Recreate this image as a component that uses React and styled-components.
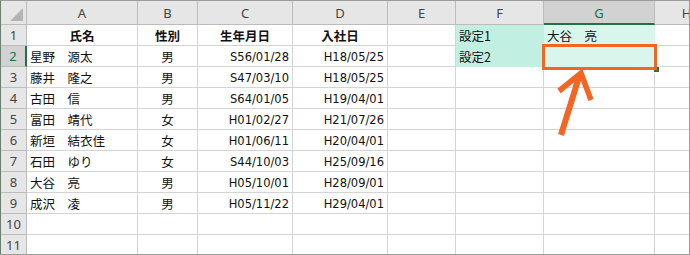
import React from "react";
import styled, { createGlobalStyle } from "styled-components";

const GlobalStyle = createGlobalStyle`
  html, body {
    margin: 0;
    padding: 0;
    background: #fff;
  }
`;

const GRID = "#d4d4d4";
const HEAD_LINE = "#bcbcbc";
const EXCEL_GREEN = "#217346";
const ORANGE = "#f26522";

const Frame = styled.div`
  position: relative;
  width: 690px;
  height: 255px;
  box-sizing: border-box;
  border-top: 1px solid #9c9c9c;
  border-bottom: 1px solid #9c9c9c;
  border-right: 1px solid #9c9c9c;
  border-left: 1px solid #6d7f72;
  overflow: hidden;
  background: #fff;
`;

const Sheet = styled.div`
  display: grid;
  grid-template-columns: 26px 111px 60px 95px 95px 68px 88px 111px 64px;
  grid-template-rows: 24px repeat(11, 21px);
`;

const Corner = styled.div`
  position: relative;
  background: #e6e6e6;
  border-right: 1px solid ${HEAD_LINE};
  border-bottom: 1px solid ${HEAD_LINE};
  &::after {
    content: "";
    position: absolute;
    right: 3px;
    bottom: 3px;
    border-style: solid;
    border-width: 0 0 13px 13px;
    border-color: transparent transparent #b4b4b4 transparent;
  }
`;

const ColHead = styled.div`
  display: flex;
  align-items: center;
  justify-content: center;
  background: ${(p) => (p.$active ? "#d2d2d2" : "#e6e6e6")};
  border-right: 1px solid ${HEAD_LINE};
  border-bottom: ${(p) => (p.$active ? `2px solid ${EXCEL_GREEN}` : `1px solid ${HEAD_LINE}`)};
  color: ${(p) => (p.$active ? EXCEL_GREEN : "#444")};
  font-family: "Noto Sans", "Open Sans", sans-serif;
  font-size: 13px;
  padding-top: 1px;
`;

const RowHead = styled.div`
  display: flex;
  align-items: center;
  justify-content: center;
  background: ${(p) => (p.$active ? "#d2d2d2" : "#e6e6e6")};
  border-right: ${(p) => (p.$active ? `2px solid ${EXCEL_GREEN}` : `1px solid ${HEAD_LINE}`)};
  border-bottom: 1px solid ${HEAD_LINE};
  color: ${(p) => (p.$active ? EXCEL_GREEN : "#444")};
  font-family: "Noto Sans", "Open Sans", sans-serif;
  font-size: 13px;
`;

const Cell = styled.div`
  display: flex;
  align-items: center;
  justify-content: ${(p) =>
    p.$align === "center" ? "center" : p.$align === "right" ? "flex-end" : "flex-start"};
  padding: 1px 3px 0 3px;
  background: ${(p) => p.$fill || "#fff"};
  border-right: 1px solid ${(p) => p.$fill || GRID};
  border-bottom: 1px solid ${(p) => p.$fill || GRID};
  color: #111;
  font-family: ${(p) =>
    p.$num ? `"DejaVu Sans", sans-serif` : `"Noto Sans CJK JP", sans-serif`};
  font-size: ${(p) => (p.$num ? "11.5px" : "12.5px")};
  font-weight: ${(p) => (p.$bold ? 700 : 400)};
  white-space: nowrap;
  overflow: hidden;
`;

const SelectBox = styled.div`
  position: absolute;
  left: 541px;
  top: 43px;
  width: 115px;
  height: 26px;
  box-sizing: border-box;
  border: 3px solid ${ORANGE};
`;

const FillHandle = styled.div`
  position: absolute;
  left: 652px;
  top: 65px;
  width: 5px;
  height: 5px;
  background: ${EXCEL_GREEN};
  border: 1px solid #fff;
  z-index: 0;
`;

const Arrow = styled.svg`
  position: absolute;
  left: 0;
  top: 0;
  pointer-events: none;
`;

const columns = ["A", "B", "C", "D", "E", "F", "G", "H"];

const teal = "#c1efe2";
const mint = "#d9f6ed";

const people = [
  ["星野　源太", "男", "S56/01/28", "H18/05/25"],
  ["藤井　隆之", "男", "S47/03/10", "H18/05/25"],
  ["古田　信", "男", "S64/01/05", "H19/04/01"],
  ["富田　靖代", "女", "H01/02/27", "H21/07/26"],
  ["新垣　結衣佳", "女", "H01/06/11", "H20/04/01"],
  ["石田　ゆり", "女", "S44/10/03", "H25/09/16"],
  ["大谷　亮", "男", "H05/10/01", "H28/09/01"],
  ["成沢　凌", "男", "H05/11/22", "H29/04/01"],
];

const App = () => {
  const rows = [];

  // row 1: headings and setting 1
  rows.push(
    <React.Fragment key="r1">
      <RowHead>1</RowHead>
      <Cell $align="center" $bold>氏名</Cell>
      <Cell $align="center" $bold>性別</Cell>
      <Cell $align="center" $bold>生年月日</Cell>
      <Cell $align="center" $bold>入社日</Cell>
      <Cell />
      <Cell $fill={teal}>設定1</Cell>
      <Cell $fill={mint}>大谷　亮</Cell>
      <Cell />
    </React.Fragment>
  );

  people.forEach((p, i) => {
    const n = i + 2;
    rows.push(
      <React.Fragment key={n}>
        <RowHead $active={n === 2}>{n}</RowHead>
        <Cell>{p[0]}</Cell>
        <Cell $align="center">{p[1]}</Cell>
        <Cell $align="right" $num>{p[2]}</Cell>
        <Cell $align="right" $num>{p[3]}</Cell>
        <Cell />
        {n === 2 ? <Cell $fill={teal}>設定2</Cell> : <Cell />}
        {n === 2 ? <Cell $fill={mint} /> : <Cell />}
        <Cell />
      </React.Fragment>
    );
  });

  [10, 11].forEach((n) => {
    rows.push(
      <React.Fragment key={n}>
        <RowHead>{n}</RowHead>
        {columns.map((c) => (
          <Cell key={c} />
        ))}
      </React.Fragment>
    );
  });

  return (
    <>
      <GlobalStyle />
      <Frame>
        <Sheet>
          <Corner />
          {columns.map((c) => (
            <ColHead key={c} $active={c === "G"}>
              {c}
            </ColHead>
          ))}
          {rows}
        </Sheet>
        <FillHandle />
        <SelectBox />
        <Arrow width="690" height="255" viewBox="0 0 690 255">
          <line x1="560" y1="134" x2="578" y2="76" stroke={ORANGE} strokeWidth="6" />
          <polyline
            points="558,90 580,72 590,99"
            fill="none"
            stroke={ORANGE}
            strokeWidth="5.5"
            strokeLinejoin="miter"
          />
        </Arrow>
      </Frame>
    </>
  );
};

export default App;
